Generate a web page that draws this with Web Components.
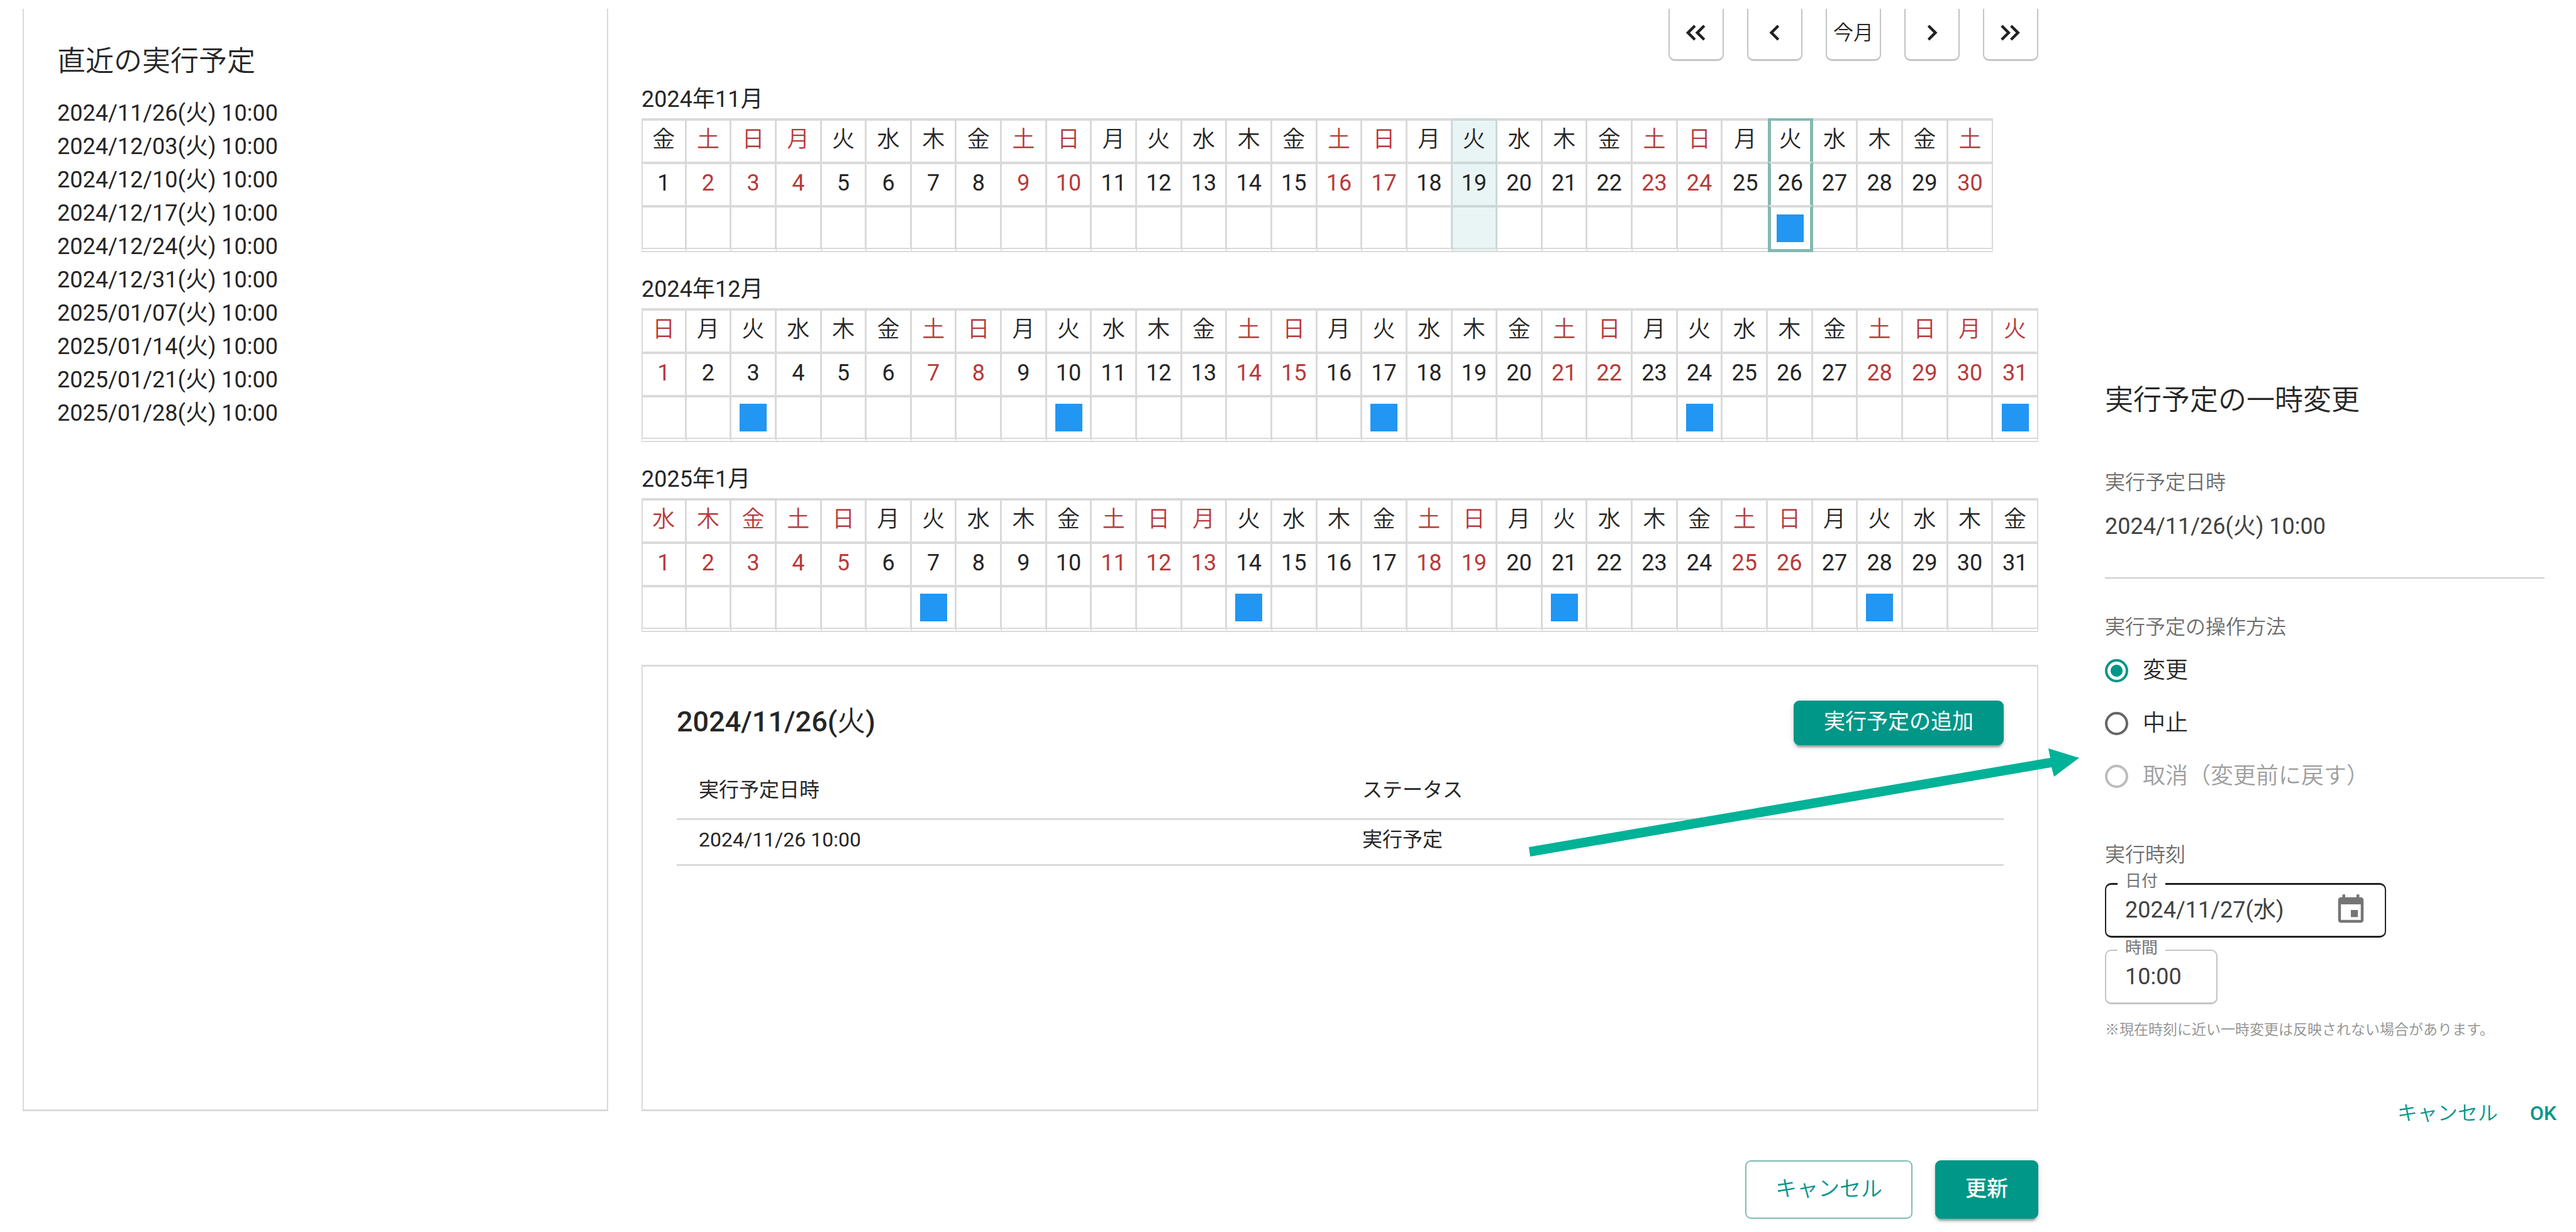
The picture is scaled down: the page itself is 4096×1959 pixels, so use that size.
<!DOCTYPE html>
<html lang="ja">
<head>
<meta charset="utf-8">
<title>実行予定</title>
<style>
  body {
    margin: 0;
    background: #fff;
    color: #262626;
    font: 400 36px/54px Roboto, "Noto Sans CJK JP", sans-serif;
    --teal: #009688;
    --line: #dadada;
    --thin: 350;
  }
</style>
</head>
<body>
<schedule-page>
  <recent-list slot="recent"></recent-list>
  <month-nav slot="calendar"></month-nav>
  <month-table slot="calendar" label="2024年11月" days="30" first="5" off="4" runs="26" today="19" selected="26"></month-table>
  <month-table slot="calendar" label="2024年12月" days="31" first="0" off="30,31" runs="3,10,17,24,31"></month-table>
  <month-table slot="calendar" label="2025年1月" days="31" first="3" off="1,2,3,13" runs="7,14,21,28"></month-table>
  <day-detail slot="calendar"></day-detail>
  <ui-button slot="actions" variant="outlined">キャンセル</ui-button>
  <ui-button slot="actions" variant="contained" strong>更新</ui-button>
  <change-dialog slot="dialog"></change-dialog>
</schedule-page>

<script>
const define = (name, html, setup) => {
  const template = document.createElement('template');
  template.innerHTML = html;
  customElements.define(name, class extends HTMLElement {
    constructor() {
      super();
      this.attachShadow({ mode: 'open' }).append(template.content.cloneNode(true));
    }
    connectedCallback() {
      if (setup && !this.ready) { this.ready = true; setup(this, this.shadowRoot); }
    }
  });
};

define('schedule-page', `
  <style>
    :host {
      position: relative;
      display: grid;
      grid-template-columns: 931fr 2221fr 802fr;
      grid-template-rows: 1fr auto;
      column-gap: 53px;
      min-height: 100vh;
      box-sizing: border-box;
      padding: 14px 0 0 36px;
    }
    .recent { display: grid; }
    .calendar { display: flex; flex-direction: column; min-width: 0; }
    .actions { grid-column: 2; grid-row: 2; display: flex; justify-content: flex-end; gap: 36px; padding: 78px 0 21px; }
    .dialog { grid-column: 3; grid-row: 1 / 3; padding-left: 53px; min-width: 0; }
    .pointer { position: absolute; left: 0; top: 0; width: 100%; pointer-events: none; }
  </style>
  <section class="recent"><slot name="recent"></slot></section>
  <main class="calendar"><slot name="calendar"></slot></main>
  <footer class="actions"><slot name="actions"></slot></footer>
  <aside class="dialog"><slot name="dialog"></slot></aside>
  <svg class="pointer" viewBox="0 0 4096 1959" aria-hidden="true">
    <path fill="#00b297" d="M2431 1347 3260 1205 3257 1190 3306 1205 3266 1235 3262 1220 2433 1362Z"/>
  </svg>
`);

define('recent-list', `
  <style>
    :host { display: block; border: solid var(--line); border-width: 0 2px 3px; padding: 54px 53px 0; }
    h2 { margin: 0 0 26px; font-size: 45px; line-height: 60px; font-weight: var(--thin); }
    ol { margin: 0; padding: 0; list-style: none; line-height: 53px; }
  </style>
  <h2>直近の実行予定</h2>
  <ol></ol>
`, (host, root) => {
  for (const d of ['2024/11/26', '2024/12/03', '2024/12/10', '2024/12/17', '2024/12/24', '2024/12/31',
                   '2025/01/07', '2025/01/14', '2025/01/21', '2025/01/28']) {
    const li = document.createElement('li');
    li.textContent = d + '(火) 10:00';
    root.querySelector('ol').append(li);
  }
});

define('month-nav', `
  <style>
    :host { display: flex; justify-content: flex-end; gap: 37px; margin-bottom: 36px; }
    button {
      width: 88px; height: 83px; box-sizing: border-box; padding: 0 0 4px;
      display: flex; align-items: center; justify-content: center;
      border: solid #c4c4c4; border-width: 0 2px 3px; border-radius: 0 0 10px 10px;
      background: #fff; color: inherit; font: inherit; font-size: 32px; font-weight: var(--thin); white-space: nowrap;
    }
    svg { width: 54px; height: 54px; fill: #212121; }
  </style>
  <button aria-label="前年"><svg viewBox="0.600 0 24 24"><path d="M17.6 17.6 12 12l5.6-5.6L19 7.8 14.800 12 19 16.200zM11 17.600 5.400 12 11 6.400 12.400 7.800 8.200 12 12.400 16.200z"/></svg></button>
  <button aria-label="前月"><svg viewBox="1.200 0 24 24"><path d="M15 17.600 9.400 12 15 6.400 16.400 7.800 12.200 12 16.400 16.200z"/></svg></button>
  <button>今月</button>
  <button aria-label="翌月"><svg viewBox="-1.200 0 24 24"><path d="M9 17.600 14.600 12 9 6.400 7.600 7.800 11.800 12 7.600 16.200z"/></svg></button>
  <button aria-label="翌年"><svg viewBox="0 0 24 24"><path d="M6.400 17.600 12 12 6.400 6.400 5 7.800 9.200 12 5 16.200zM13 17.600 18.600 12 13 6.400 11.600 7.800 15.800 12 11.600 16.200z"/></svg></button>
`);

define('month-table', `
  <style>
    :host { display: block; margin-bottom: 34px; --frame: #84b9b1; --tint: #ccd8d7; }
    table { border-collapse: separate; border-spacing: 0; table-layout: fixed; }
    caption { text-align: left; white-space: nowrap; line-height: 50px; padding-bottom: 5px; }
    th, td {
      box-sizing: border-box; height: 69px; padding: 0 0 5px; text-align: center; font-weight: 400;
      line-height: 58px; border: solid var(--line); border-width: 4px 3px 0 0;
    }
    th { font-weight: var(--thin); }
    tr > :first-child { border-left-width: 2px; }
    tr > :last-child { border-right-width: 2px; }
    tr:last-child td { height: 75px; padding: 0; border-bottom: 7px double var(--line); }
    .off { color: #b83a3a; }
    tr > .today { background: #e9f5f5; border-color: var(--tint); }
    tr > .eve { border-right-color: var(--tint); }
    tr > .before { border-right-width: 0; }
    tr > .selected { border-left: 5px solid var(--frame); border-right: 5px solid var(--frame); }
    thead tr:first-child .selected { border-top-color: var(--frame); }
    tr:last-child td.selected { border-bottom: 5px solid var(--frame); }
    i { display: block; width: 43px; height: 44px; margin: 0 auto; background: #2196f3; }
  </style>
  <table><caption></caption><thead><tr></tr></thead><tbody><tr></tr><tr></tr></tbody></table>
`, (host, root) => {
  const list = name => (host.getAttribute(name) || '').split(',').map(Number);
  const [days, first] = [list('days')[0], list('first')[0]];
  const off = list('off'), runs = list('runs');
  const today = list('today')[0], selected = list('selected')[0];
  root.querySelector('table').style.width = 'calc(100% * ' + days + ' / 31)';
  root.querySelector('caption').textContent = host.getAttribute('label');
  const rows = root.querySelectorAll('tr');
  for (let d = 1; d <= days; d++) {
    const w = (first + d - 1) % 7;
    rows.forEach((row, r) => {
      const cell = document.createElement(r ? 'td' : 'th');
      if (w === 0 || w === 6 || off.includes(d)) cell.classList.add('off');
      if (d === today) cell.classList.add('today');
      if (d === today - 1) cell.classList.add('eve');
      if (d === selected) cell.classList.add('selected');
      if (d === selected - 1) cell.classList.add('before');
      if (r === 0) cell.textContent = '日月火水木金土'[w];
      if (r === 1) cell.textContent = d;
      if (r === 2 && runs.includes(d)) cell.append(document.createElement('i'));
      row.append(cell);
    });
  }
});

define('ui-button', `
  <style>
    :host { display: block; }
    button {
      display: block; box-sizing: border-box; height: 93px; padding: 0 46px 3px; border: 2px solid #80bcb4; border-radius: 9px;
      background: #fff; color: var(--teal); font: inherit; font-size: 34px; font-weight: var(--thin); white-space: nowrap;
    }
    :host([variant=contained]) button {
      border-color: var(--teal); background: var(--teal); color: #fff; font-weight: 400;
      box-shadow: 0 7px 2px -4px rgba(0,0,0,.2), 0 4px 4px rgba(0,0,0,.14), 0 2px 11px rgba(0,0,0,.12);
    }
    :host([strong]) button { font-weight: 500; }
    :host([small]) button { height: 71px; padding-bottom: 5px; }
    :host([variant=text]) button { border: 0; padding: 0; height: 60px; font-size: 32px; background: none; }
    :host([strong][variant]) button { font-weight: 500; }
  </style>
  <button><slot></slot></button>
`);

define('day-detail', `
  <style>
    :host { display: block; flex: 1; margin-top: 18px; border: solid var(--line); border-width: 3px 2px; padding: 54px 53px 0 54px; }
    header { display: flex; justify-content: space-between; align-items: center; margin-bottom: 26px; }
    h2 { margin: 0; padding-bottom: 4px; font-size: 45px; line-height: 60px; font-weight: 500; }
    h2 span { font-weight: var(--thin); }
    table { width: 100%; border-collapse: separate; border-spacing: 0; table-layout: fixed; font-size: 32px; line-height: 48px; }
    th, td { box-sizing: border-box; text-align: left; font-weight: 400; padding: 0 35px; border-bottom: 3px solid var(--line); }
    th { height: 93px; }
    td { height: 73px; padding-bottom: 8px; }
  </style>
  <header><h2>2024/11/26(<span>火</span>)</h2><ui-button variant="contained" small>実行予定の追加</ui-button></header>
  <table>
    <thead><tr><th>実行予定日時</th><th>ステータス</th></tr></thead>
    <tbody><tr><td>2024/11/26 10:00</td><td>実行予定</td></tr></tbody>
  </table>
`);

define('outlined-field', `
  <style>
    :host { display: block; width: fit-content; }
    fieldset {
      margin: 0; padding: 0 27px 14px 18px; min-width: 0; border: solid #c4c4c4; border-width: 2px 2px 3px; border-radius: 10px;
    }
    legend { padding: 0 12px 8px; font-size: 26px; line-height: 22px; color: #757575; }
    div { display: flex; align-items: center; justify-content: space-between; height: 54px; padding-left: 12px; color: #424242; }
    input { min-width: 0; flex: 1; border: 0; padding: 0; background: none; color: inherit; font: inherit; outline: 0; }
    :host([hovered]) fieldset { border-color: #212121; border-top-width: 3px; }
  </style>
  <fieldset><legend><label for="f"></label></legend><div><input id="f" type="text"><slot></slot></div></fieldset>
`, (host, root) => {
  root.querySelector('label').textContent = host.getAttribute('label');
  root.querySelector('input').value = host.getAttribute('value');
});

define('change-dialog', `
  <style>
    :host { display: block; padding: 593px 0 0; }
    h2 { margin: 0 0 76px; font-size: 45px; line-height: 60px; font-weight: var(--thin); }
    h3 { margin: 0; font-size: 32px; line-height: 48px; font-weight: var(--thin); color: #6c6c6c; }
    p { margin: 0; }
    .value { margin-top: 19px; color: #424242; }
    hr { margin: 54px 50px 53px 0; border: 0; height: 2px; background: #ccc; }
    .choices { margin: 3px 0 59px; font-weight: var(--thin); }
    .choices label { display: flex; align-items: center; gap: 23px; height: 84px; }
    input[type=radio] {
      appearance: none; box-sizing: border-box; width: 37px; height: 37px; margin: 0;
      border: 4px solid #666; border-radius: 50%;
    }
    input[type=radio]:checked { border-color: var(--teal); background: radial-gradient(circle, var(--teal) 9px, transparent 10px); }
    input[type=radio]:disabled { border-color: #bdbdbd; }
    .disabled { color: #9e9e9e; }
    .date { margin: 7px 0 5px; width: 447px; }
    .time { width: 179px; }
    svg { width: 54px; height: 54px; fill: #757575; }
    .note { margin: 25px 0 86px; font-size: 23px; line-height: 32px; font-weight: var(--thin); color: #8f8f8f; }
    .buttons { display: flex; justify-content: flex-end; gap: 51px; padding-right: 31px; }
  </style>
  <h2>実行予定の一時変更</h2>
  <h3>実行予定日時</h3>
  <p class="value">2024/11/26(火) 10:00</p>
  <hr>
  <h3>実行予定の操作方法</h3>
  <div class="choices">
    <label><input type="radio" name="op" checked>変更</label>
    <label><input type="radio" name="op">中止</label>
    <label class="disabled"><input type="radio" name="op" disabled>取消（変更前に戻す）</label>
  </div>
  <h3>実行時刻</h3>
  <outlined-field class="date" hovered label="日付" value="2024/11/27(水)">
    <svg viewBox="0 0 24 24" aria-hidden="true"><path d="M17 12h-5v5h5v-5zM16 1v2H8V1H6v2H5c-1.110 0-1.990.900-1.990 2L3 19c0 1.100.890 2 2 2h14c1.100 0 2-.900 2-2V5c0-1.100-.900-2-2-2h-1V1h-2zm3 18H5V8h14v11z"/></svg>
  </outlined-field>
  <outlined-field class="time" label="時間" value="10:00"></outlined-field>
  <p class="note">※現在時刻に近い一時変更は反映されない場合があります。</p>
  <div class="buttons">
    <ui-button variant="text">キャンセル</ui-button>
    <ui-button variant="text" strong>OK</ui-button>
  </div>
`);
</script>
</body>
</html>
